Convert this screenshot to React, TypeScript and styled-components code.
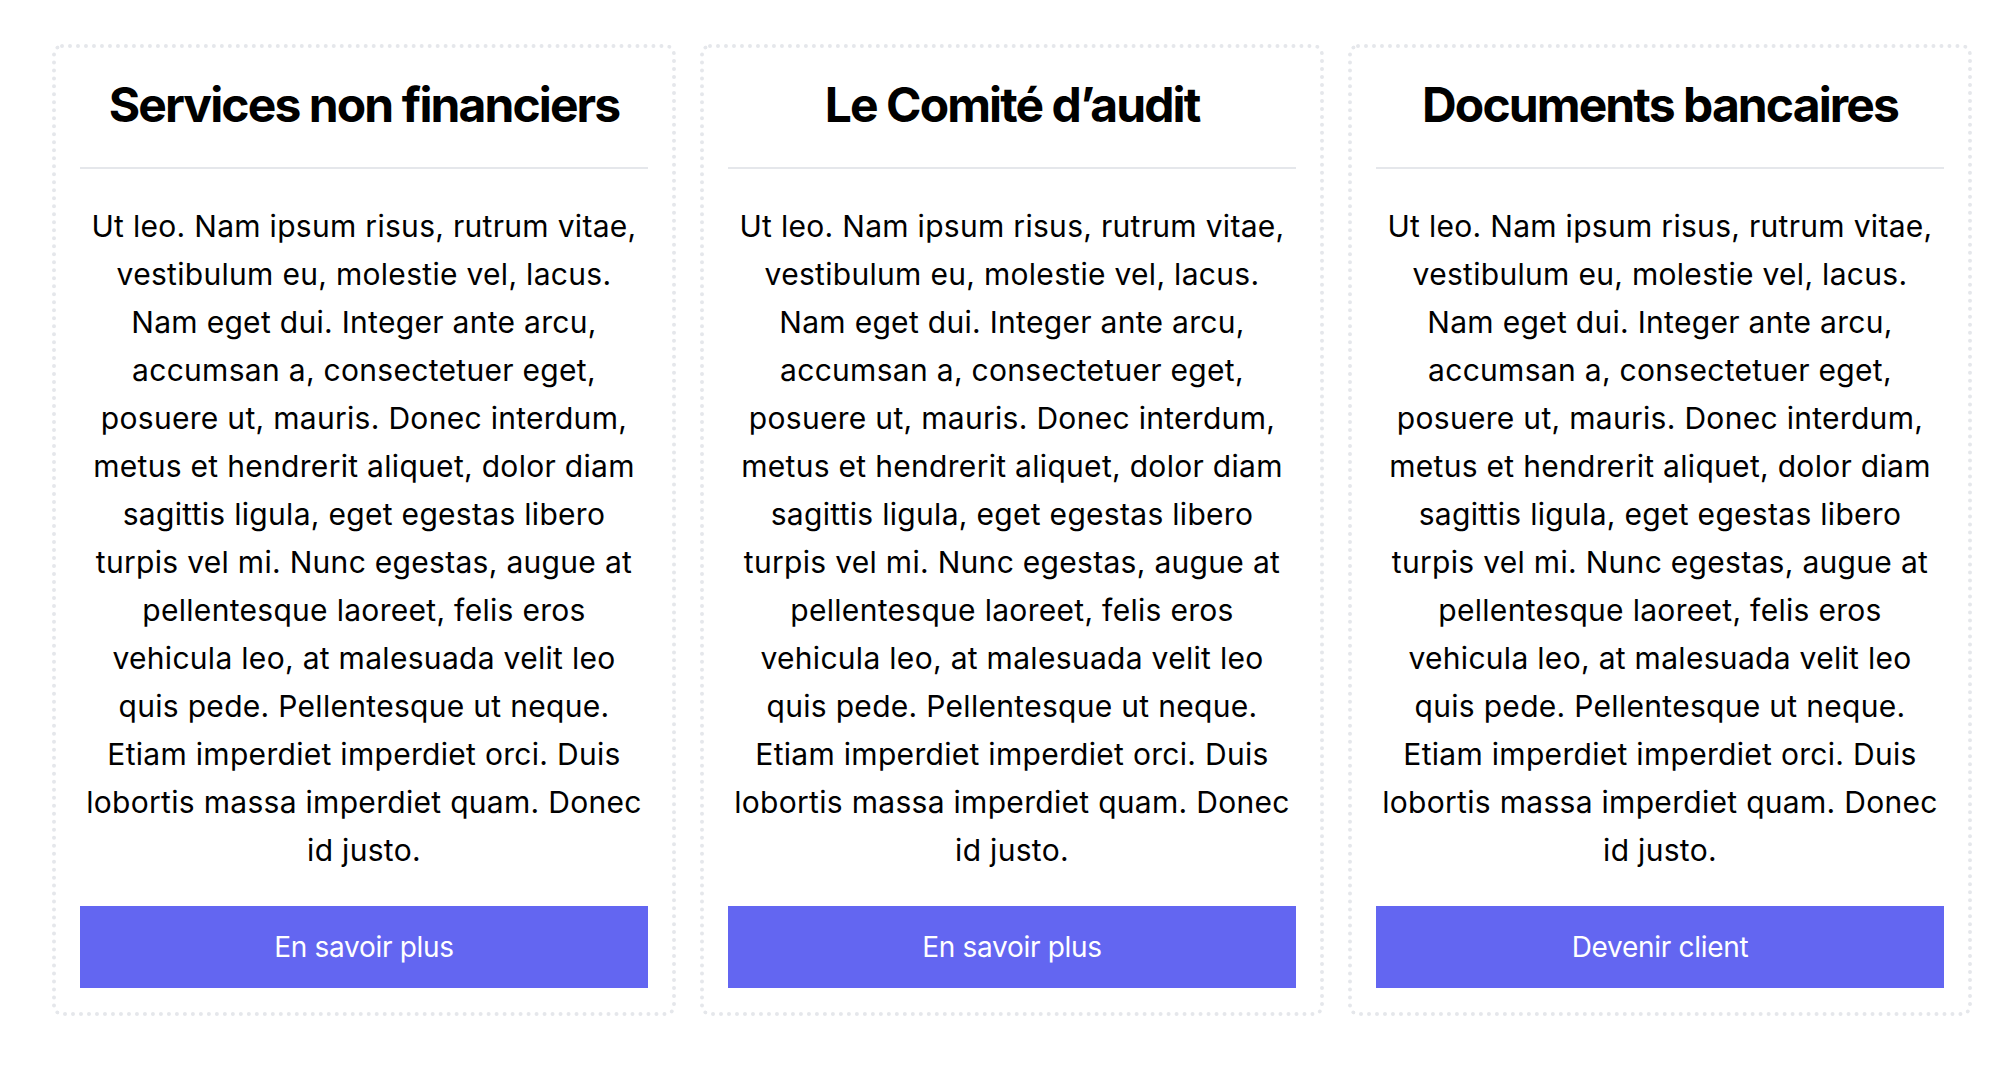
import * as React from 'react';
import styled, { createGlobalStyle } from 'styled-components';

const GlobalStyle = createGlobalStyle`
  body {
    margin: 0;
    background: #ffffff;
    font-family: Inter, "Noto Sans", "Liberation Sans", sans-serif;
    color: #000000;
  }
`;

const CardGrid = styled.div`
  display: grid;
  grid-template-columns: repeat(3, 624px);
  column-gap: 24px;
  padding: 44px 42px 0 52px;
  align-items: start;
`;

const Card = styled.section`
  display: flex;
  flex-direction: column;
  border: 4px dotted #e5e7eb;
  border-radius: 10px;
  padding: 24px;
`;

const Title = styled.h2`
  margin: 0;
  font-size: 48px;
  line-height: 66px;
  font-weight: 700;
  text-align: center;
  letter-spacing: -1.9px;
`;

const Divider = styled.hr`
  margin: 29px 0 0;
  border: 0;
  height: 2px;
  background: #e5e7eb;
`;

const Body = styled.p`
  margin: 33px 0 0;
  font-size: 30px;
  line-height: 48px;
  text-align: center;
  letter-spacing: 0.3px;
`;

const ActionButton = styled.button`
  margin-top: 32px;
  height: 82px;
  border: 0;
  background: #6366f1;
  color: #ffffff;
  font-family: inherit;
  font-size: 28px;
  letter-spacing: -0.3px;
  cursor: pointer;
`;

const text =
  'Ut leo. Nam ipsum risus, rutrum vitae, vestibulum eu, molestie vel, lacus. Nam eget dui. Integer ante arcu, accumsan a, consectetuer eget, posuere ut, mauris. Donec interdum, metus et hendrerit aliquet, dolor diam sagittis ligula, eget egestas libero turpis vel mi. Nunc egestas, augue at pellentesque laoreet, felis eros vehicula leo, at malesuada velit leo quis pede. Pellentesque ut neque. Etiam imperdiet imperdiet orci. Duis lobortis massa imperdiet quam. Donec id justo.';

const cards = [
  { title: 'Services non financiers', action: 'En savoir plus' },
  { title: 'Le Comité d’audit', action: 'En savoir plus' },
  { title: 'Documents bancaires', action: 'Devenir client' },
];

export default function App() {
  return (
    <>
      <GlobalStyle />
      <CardGrid>
        {cards.map((card) => (
          <Card key={card.title}>
            <Title>{card.title}</Title>
            <Divider />
            <Body>{text}</Body>
            <ActionButton>{card.action}</ActionButton>
          </Card>
        ))}
      </CardGrid>
    </>
  );
}
